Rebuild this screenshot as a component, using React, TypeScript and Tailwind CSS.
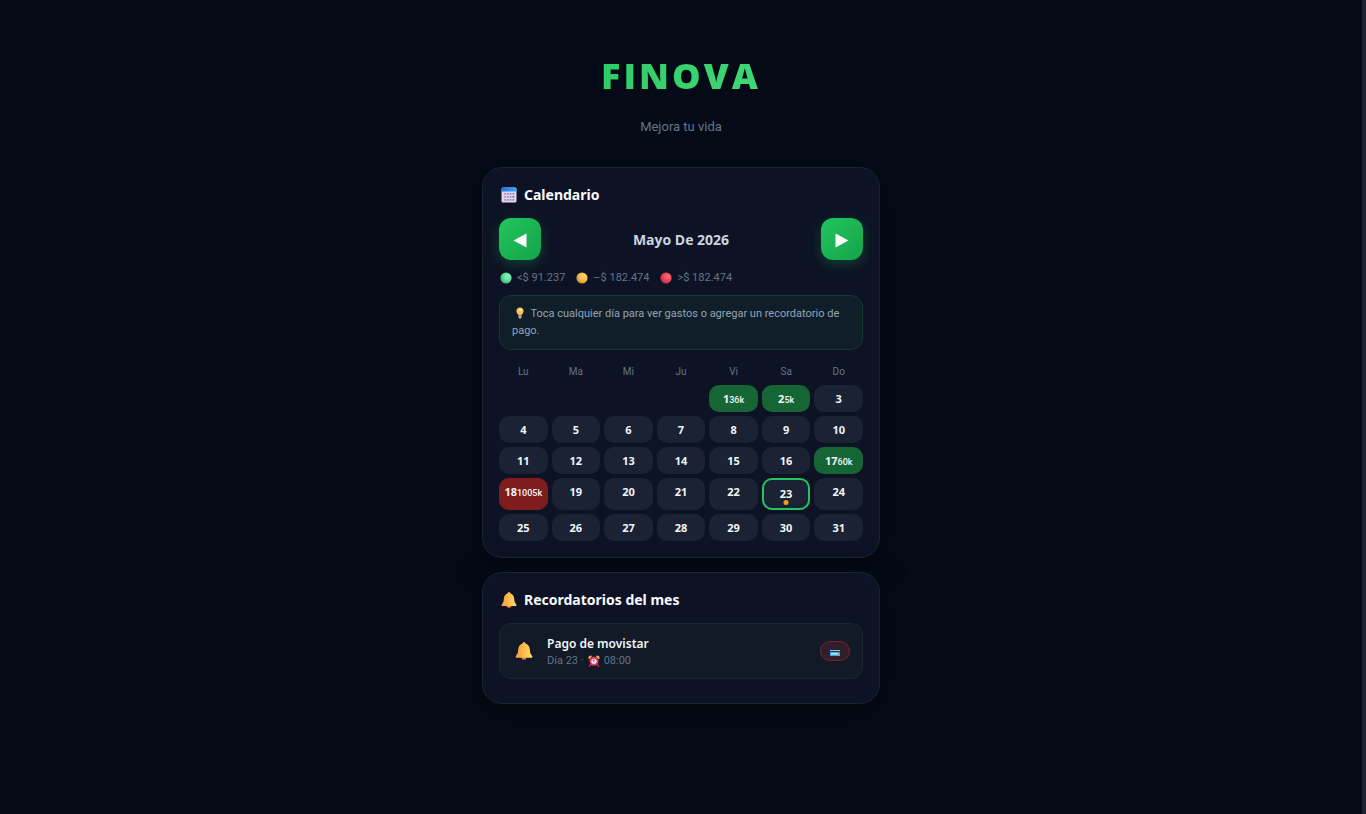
import { useState, type ReactNode } from "react";
import { clsx } from "clsx";

type Level = "low" | "mid" | "high";

const weekdays = ["Lu", "Ma", "Mi", "Ju", "Vi", "Sa", "Do"];

// Mayo 2026 starts on a Friday
const leadingBlanks = 4;
const daysInMonth = 31;

const spending: Record<number, { amount: string; level: Level }> = {
  1:  { amount: "36k",   level: "low" },
  2:  { amount: "5k",    level: "low" },
  17: { amount: "60k",   level: "low" },
  18: { amount: "1005k", level: "high" },
};

const levelBg: Record<Level, string> = {
  low: "bg-[#166534]",
  mid: "bg-[#854d0e]",
  high: "bg-[#7f1d1d]",
};

const legend = [
  { id: "g", light: "#86f7b5", base: "#5fdc98", dark: "#4a9a78", label: "<$ 91.237" },
  { id: "y", light: "#ffd873", base: "#f5b945", dark: "#b07f35", label: "–$ 182.474" },
  { id: "r", light: "#ff6b7d", base: "#ee4259", dark: "#a32c48", label: ">$ 182.474" },
];

function CalendarIcon() {
  return (
    <svg viewBox="0 0 16 16" className="w-4 h-4 shrink-0" aria-hidden="true">
      <defs>
        <linearGradient id="cal-top" x1="0" x2="1">
          <stop offset="0" stopColor="#1b76dd" />
          <stop offset="1" stopColor="#38a6ff" />
        </linearGradient>
      </defs>
      <rect x="0.5" y="0.5" width="15" height="15" rx="1.5" fill="#e3d6ee" />
      <path d="M0.5 4.500V2a1.500 1.500 0 0 1 1.500-1.500h12a1.500 1.500 0 0 1 1.500 1.500v2.500z" fill="url(#cal-top)" />
      {[6, 9, 12].map((y) =>
        [3, 5.8, 8.6, 11.4].map((x) => (
          <rect
            key={`${x}-${y}`}
            x={x}
            y={y}
            width="1.8"
            height="1.8"
            rx="0.4"
            fill={x > 11 && y === 9 ? "#2f8df0" : "#9d8fb3"}
          />
        ))
      )}
    </svg>
  );
}

function BellIcon({ className }: { className: string }) {
  return (
    <svg viewBox="0 0 18 18" className={className} aria-hidden="true">
      <defs>
        <linearGradient id="bell" x1="0" x2="1">
          <stop offset="0" stopColor="#f09a45" />
          <stop offset="0.5" stopColor="#ffbc4a" />
          <stop offset="1" stopColor="#ffe066" />
        </linearGradient>
      </defs>
      <ellipse cx="9" cy="16" rx="2.4" ry="1.7" fill="#d9853f" />
      <path
        d="M9 0.3c-1 0-1.6.6-1.7 1.4C4.600 2.500 3.400 4.800 3.200 7.500L2.700 11 .6 14.600C.4 15.200.7 15.700 1.300 15.700h15.400c.6 0 .9-.5.7-1.100L15.300 11l-.5-3.500C14.600 4.800 13.400 2.500 10.700 1.700 10.600.9 10 .3 9 .3z"
        fill="url(#bell)"
      />
    </svg>
  );
}

function BulbIcon() {
  return (
    <svg viewBox="0 0 8 12" className="inline-block w-2 h-3 mx-1 align-[-2px]" aria-hidden="true">
      <path d="M4 .4C1.900.4.4 1.900.4 3.900c0 1.300.7 2.200 1.300 3 .4.5.7 1 .7 1.700h3.200c0-.7.3-1.200.7-1.700.6-.8 1.300-1.700 1.300-3C7.600 1.900 6.100.4 4 .4z" fill="#ffbe4d" />
      <ellipse cx="4.600" cy="2.700" rx="1.700" ry="1.500" fill="#fff0a8" />
      <rect x="2.500" y="8.400" width="3" height="3.200" rx="1" fill="#b9a9c4" />
    </svg>
  );
}

function AlarmIcon() {
  return (
    <svg viewBox="0 0 12 12" className="w-3 h-3 shrink-0" aria-hidden="true">
      <path d="M.5 3.500A2.300 2.300 0 0 1 4 1L1.600 4.300z" fill="#ffb638" />
      <path d="M11.500 3.500A2.300 2.300 0 0 0 8 1l2.400 3.300z" fill="#ffb638" />
      <path d="M2.500 9.500 1.500 11.500M9.500 9.500l1 2" stroke="#d8254f" strokeWidth="1.300" strokeLinecap="round" />
      <circle cx="6" cy="6.300" r="4.500" fill="#ee3566" />
      <circle cx="6" cy="6.300" r="2.600" fill="#f9e6ee" />
      <path d="M6 4.400v2.100L4.700 5.600" fill="none" stroke="#5b4863" strokeWidth="0.900" />
    </svg>
  );
}

function CardIcon() {
  return (
    <svg viewBox="0 0 10 6" className="w-2.5 h-1.5" aria-hidden="true">
      <rect width="10" height="6" fill="#38a9e6" />
      <rect width="10" height="1" fill="#6fd0ef" />
      <rect y="1" width="10" height="1.100" fill="#27405c" />
      <rect x="1" y="3" width="7" height="1.500" fill="#d5e4ee" />
      <rect x="8" y="4.500" width="1.300" height="1.200" fill="#e5b93f" />
    </svg>
  );
}

function Panel({ icon, title, children }: { icon: ReactNode; title: string; children: ReactNode }) {
  return (
    <section className="rounded-[20px] border border-[#1b2332] bg-[#0d1324] p-4 shadow-[0_8px_32px_rgba(0,0,0,0.4)]">
      <h2 className="flex items-center gap-[7px] pl-0.5 mb-3 text-sm leading-[22px] font-bold text-[#f8fafc]">
        {icon}
        {title}
      </h2>
      {children}
    </section>
  );
}

function NavButton({ label, points, onClick }: { label: string; points: string; onClick: () => void }) {
  return (
    <button
      type="button"
      aria-label={label}
      onClick={onClick}
      className="flex items-center justify-center w-[42px] h-[42px] pt-0.5 rounded-xl bg-linear-135 from-[#22c55e] to-[#16a34a] shadow-[0_4px_12px_rgba(34,197,94,0.25)]"
    >
      <svg viewBox="0 0 14 15" className="w-3.5 h-[15px]" aria-hidden="true">
        <polygon points={points} fill="#fff" />
      </svg>
    </button>
  );
}

export default function App() {
  const [selected, setSelected] = useState(23);
  const days = Array.from({ length: daysInMonth }, (_, i) => i + 1);

  return (
    <div className="flex min-h-screen bg-[#040b16] font-['Noto_Sans',sans-serif] text-[#f1f5f9]">
      <main className="flex-1 px-4">
        <div className="w-full max-w-[398px] mx-auto pt-12">
          <header className="mb-[30px] text-center">
            <h1 className="bg-linear-90 from-[#22c55e] to-[#4ade80] bg-clip-text text-transparent font-['Open_Sans',sans-serif] text-[36px] leading-[56px] font-extrabold tracking-[3px]">
              FINOVA
            </h1>
            <p className="mt-3 font-['Roboto',sans-serif] text-[13px] leading-[21px] text-[#64748b]">Mejora tu vida</p>
          </header>

          <div className="flex flex-col gap-3.5">
            <Panel icon={<CalendarIcon />} title="Calendario">
              <div className="flex items-center justify-between mb-[9px]">
                <NavButton label="Mes anterior" points="0.500,7.500 13.500,0.500 13.500,14.500" onClick={() => setSelected(1)} />
                <span className="pt-0.5 font-['Open_Sans',sans-serif] text-sm font-bold text-[#cbd5e1]">Mayo De 2026</span>
                <NavButton label="Mes siguiente" points="13.500,7.500 0.500,0.500 0.500,14.500" onClick={() => setSelected(31)} />
              </div>

              {/* Spending thresholds */}
              <ul className="flex gap-[11px] mb-[9px] pl-px font-['Roboto',sans-serif] text-[11px] leading-[17px] text-[#64748b]">
                {legend.map(({ id, light, base, dark, label }) => (
                  <li key={id} className="flex items-center gap-[5px]">
                    <svg viewBox="0 0 12 12" className="w-3 h-3" aria-hidden="true">
                      <defs>
                        <radialGradient id={`dot-${id}`} cx="0.65" cy="0.35" r="0.75">
                          <stop offset="0" stopColor={light} />
                          <stop offset="0.55" stopColor={base} />
                          <stop offset="1" stopColor={dark} />
                        </radialGradient>
                      </defs>
                      <circle cx="6" cy="6" r="5.600" fill={`url(#dot-${id})`} />
                    </svg>
                    {label}
                  </li>
                ))}
              </ul>

              <p className="mb-3 rounded-xl border border-[#123b31] bg-[#0f1e28] px-3 pt-[9px] pb-2.5 font-['Roboto',sans-serif] text-[11px] leading-[17px] text-[#94a3b8]">
                <BulbIcon /> Toca cualquier día para ver gastos o agregar un recordatorio de pago.
              </p>

              <div className="grid grid-cols-7 gap-1 mb-1 text-center font-['Roboto',sans-serif] text-[10px] leading-[19px] text-[#64748b]">
                {weekdays.map((d) => (
                  <span key={d}>{d}</span>
                ))}
              </div>

              <div className="grid grid-cols-7 gap-1">
                {Array.from({ length: leadingBlanks }, (_, i) => (
                  <span key={`blank-${i}`} />
                ))}
                {days.map((day) => {
                  const spent = spending[day];
                  return (
                    <button
                      key={day}
                      type="button"
                      onClick={() => setSelected(day)}
                      className={clsx(
                        "relative flex items-baseline justify-center pt-1.5 rounded-[10px] text-[11px] leading-[15px] font-bold",
                        spent ? levelBg[spent.level] : "bg-[#1a2233]",
                        selected === day ? "border-2 border-[#22c55e] pb-[7px]" : "pb-1.5"
                      )}
                    >
                      {day}
                      {spent && (
                        <span className="font-['Roboto',sans-serif] text-[9px] leading-none font-medium">{spent.amount}</span>
                      )}
                      {/* Reminder dot */}
                      {day === 23 && (
                        <span className="absolute bottom-[3px] left-1/2 w-[5px] h-[5px] -translate-x-1/2 rounded-full bg-[#f59e0b]" />
                      )}
                    </button>
                  );
                })}
              </div>
            </Panel>

            <Panel icon={<BellIcon className="w-4 h-4 shrink-0" />} title="Recordatorios del mes">
              <div className="flex items-center gap-3 mb-2 rounded-xl border border-[#1d2533] bg-[#121927] px-3 py-[9px]">
                <span className="flex justify-center w-[23px]">
                  <BellIcon className="w-[18px] h-[18px]" />
                </span>
                <div className="flex-1 pt-0.5">
                  <h3 className="text-xs leading-[18px] font-semibold">Pago de movistar</h3>
                  <p className="flex items-center gap-1 font-['Roboto',sans-serif] text-[11px] leading-4 text-[#64748b]">
                    Día 23 · <AlarmIcon /> 08:00
                  </p>
                </div>
                <span className="flex items-center justify-center w-[30px] h-5 pt-1 rounded-full border border-[#6f2631] bg-[#321d2a]">
                  <CardIcon />
                </span>
              </div>
            </Panel>
          </div>
        </div>
      </main>

      {/* Scroll track */}
      <div className="w-1 shrink-0 bg-[#1c2231]" />
    </div>
  );
}
